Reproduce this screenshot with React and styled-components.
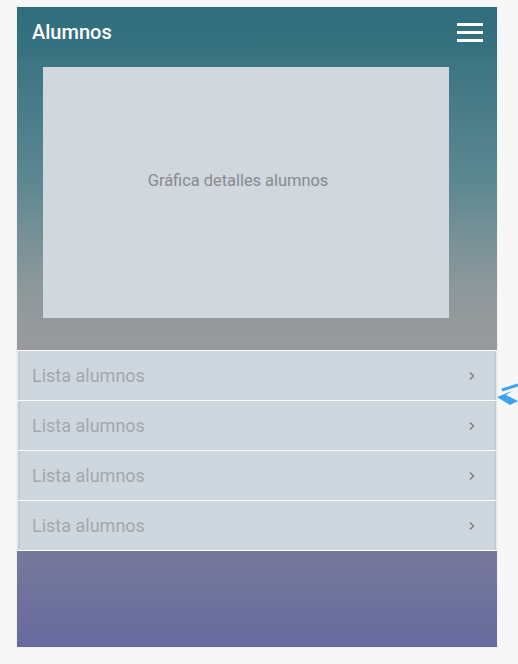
import React from "react";
import styled, { createGlobalStyle } from "styled-components";

const GlobalStyle = createGlobalStyle`
  html, body {
    margin: 0;
    padding: 0;
    background: #f7f7f7;
    font-family: Roboto, "Liberation Sans", Arial, sans-serif;
  }
`;

const Page = styled.div`
  position: relative;
  width: 518px;
  height: 664px;
  padding: 7px 0 0 17px;
  box-sizing: border-box;
`;

const Phone = styled.div`
  width: 480px;
  height: 640px;
  display: flex;
  flex-direction: column;
  box-shadow: 0 0 2px rgba(0, 0, 0, 0.08);
`;

const Hero = styled.div`
  display: flex;
  flex-direction: column;
  height: 343px;
  background: linear-gradient(180deg, #32707f 0%, #3e7683 18%, #5b8791 50%, #8d989b 82%, #9a9a9d 100%);
`;

const Toolbar = styled.div`
  height: 50px;
  display: flex;
  align-items: center;
  justify-content: space-between;
  padding: 0 14px 0 15px;
  background: rgba(45, 105, 120, 0.25);
`;

const Title = styled.h1`
  margin: 0;
  color: #ffffff;
  font-size: 20px;
  font-weight: 500;
`;

const Burger = styled.div`
  width: 26px;
  display: flex;
  flex-direction: column;
  gap: 5px;
  span {
    display: block;
    height: 3px;
    background: #ffffff;
  }
`;

const ChartBox = styled.div`
  margin: 10px 0 0 26px;
  width: 406px;
  height: 251px;
  background: #d0d7dd;
  display: flex;
  align-items: center;
  justify-content: center;
  padding: 0 16px 24px 0;
  box-sizing: border-box;
  color: #868b90;
  font-size: 16.4px;
`;

const List = styled.div`
  display: flex;
  flex-direction: column;
  background: #ffffff;
  border-top: 1px solid #ffffff;
`;

const Row = styled.div`
  height: 49px;
  display: flex;
  align-items: center;
  justify-content: space-between;
  padding: 0 20px 0 14px;
  background: #cfd7de;
  border: 1px solid #e3e8ec;
  border-top: none;
  border-bottom: 1px solid #ffffff;
  box-shadow: inset 2px 0 0 #c4ccd3, inset -2px 0 0 #c4ccd3;
  color: #a2a8ae;
  font-size: 18px;
`;

const Footer = styled.div`
  flex: 1;
  background: linear-gradient(180deg, #76799a 0%, #676a9e 100%);
`;

const Pointer = styled.svg`
  position: absolute;
  left: 496px;
  top: 381px;
`;

const Chevron = () => (
  <svg width="8" height="10" viewBox="0 0 8 10">
    <path d="M2 1.5 L5.5 5 L2 8.5" fill="none" stroke="#7d8389" strokeWidth="1.6" />
  </svg>
);

export default function App() {
  const rows = [1, 2, 3, 4];
  return (
    <>
      <GlobalStyle />
      <Page>
        <Phone>
          <Hero>
            <Toolbar>
              <Title>Alumnos</Title>
              <Burger>
                <span />
                <span />
                <span />
              </Burger>
            </Toolbar>
            <ChartBox>Gráfica detalles alumnos</ChartBox>
          </Hero>
          <List>
            {rows.map((r) => (
              <Row key={r}>
                Lista alumnos
                <Chevron />
              </Row>
            ))}
          </List>
          <Footer />
        </Phone>
        <Pointer width="22" height="26" viewBox="0 0 22 26">
          <path d="M22 4 L6 9" stroke="#3fa2f0" strokeWidth="3" fill="none" />
          <path d="M1 16 L16 10 L10 14 L22 20 L14 24 Z" fill="#3fa2f0" />
        </Pointer>
      </Page>
    </>
  );
}
